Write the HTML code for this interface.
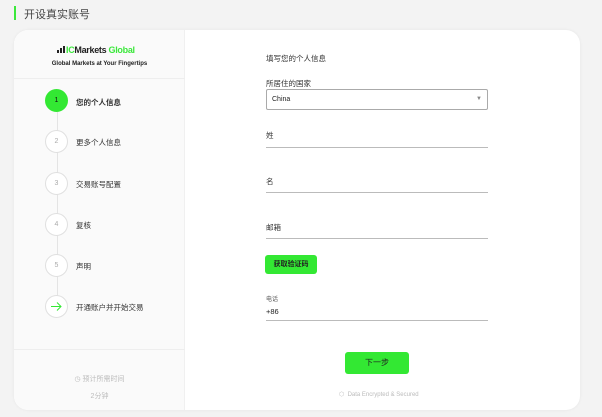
<!DOCTYPE html><html><head><meta charset="utf-8"><style>
*{margin:0;padding:0;box-sizing:border-box}
body{width:602px;height:417px;background:#f3f3f3;font-family:"Liberation Sans","Noto Sans CJK SC",sans-serif;position:relative;overflow:hidden;color:#222}
.a{position:absolute}
.card{left:14px;top:30px;width:566px;height:380px;background:#fff;border-radius:14px;box-shadow:0 0 3px rgba(0,0,0,.06);overflow:hidden}
.side{left:0;top:0;width:171px;height:380px;background:#fafafa;border-right:1px solid #f0f0f0}
.c{width:23px;height:23px;border-radius:50%;border:1px solid #e0e0e0;background:#fff;font-size:7px;color:#aaa;text-align:center;line-height:21px}
.st{font-size:7.5px;color:#333}
.lbl{font-size:7.5px;color:#333}
.ln{height:1px;background:#bbb;width:222px;left:266px}
</style></head><body>
<div class="a" style="left:14px;top:6px;width:2px;height:14px;background:#3be83b"></div>
<div class="a" style="left:24px;top:6px;font-size:11px;color:#444">开设真实账号</div>
<div class="a card">
 <div class="a side">
  <div class="a" style="left:43px;top:15px;font-size:9px;font-weight:bold;letter-spacing:-0.3px"><svg width="9" height="7" style="vertical-align:0"><rect x="0" y="4" width="2" height="3" fill="#222"/><rect x="3" y="2" width="2" height="5" fill="#222"/><rect x="6" y="0" width="2" height="7" fill="#222"/></svg><span style="color:#3be83b">IC</span>Markets <span style="color:#3be83b">Global</span></div>
  <div class="a" style="left:0;width:171px;top:31px;text-align:center;font-size:6px;font-weight:bold">Global Markets at Your Fingertips</div>
  <div class="a" style="left:0;top:48px;width:171px;height:1px;background:#eee"></div>
  <div class="a" style="left:43px;top:75px;width:1px;height:200px;background:#e4e4e4"></div>
  <div class="a c" style="left:31px;top:59px;background:#33e833;border-color:#33e833;color:#111">1</div><div class="a st" style="left:62px;top:67px;font-weight:bold">您的个人信息</div>
  <div class="a c" style="left:31px;top:100px">2</div><div class="a st" style="left:62px;top:107px">更多个人信息</div>
  <div class="a c" style="left:31px;top:142px">3</div><div class="a st" style="left:62px;top:149px">交易账号配置</div>
  <div class="a c" style="left:31px;top:183px">4</div><div class="a st" style="left:62px;top:190px">复核</div>
  <div class="a c" style="left:31px;top:224px">5</div><div class="a st" style="left:62px;top:231px">声明</div>
  <div class="a c" style="left:31px;top:265px"><svg width="21" height="21" viewBox="0 0 21 21" style="display:block"><path d="M5 10.5H15M11 6.5L15 10.5L11 14.5" fill="none" stroke="#33e833" stroke-width="1"/></svg></div><div class="a st" style="left:62px;top:272px">开通账户并开始交易</div>
  <div class="a" style="left:0;top:319px;width:171px;height:1px;background:#eee"></div>
  <div class="a" style="left:0;width:171px;top:344px;text-align:center;font-size:7px;color:#bbb">◷ 预计所需时间</div>
  <div class="a" style="left:0;width:171px;top:361px;text-align:center;font-size:7px;color:#bbb">2分钟</div>
 </div>
</div>
<div class="a lbl" style="left:266px;top:53px">填写您的个人信息</div>
<div class="a lbl" style="left:266px;top:78px">所居住的国家</div>
<div class="a" style="left:266px;top:89px;width:222px;height:21px;border:1px solid #aaa;border-radius:2px;font-size:7px;padding:6px 5px">China<span style="position:absolute;right:5px;top:6px;font-size:6px;color:#888">▼</span></div>
<div class="a lbl" style="left:266px;top:130px">姓</div><div class="a ln" style="top:147px"></div>
<div class="a lbl" style="left:266px;top:176px">名</div><div class="a ln" style="top:192px"></div>
<div class="a lbl" style="left:266px;top:222px">邮箱</div><div class="a ln" style="top:238px"></div>
<div class="a" style="left:265px;top:255px;width:52px;height:19px;background:#33e833;border-radius:3px;font-size:7px;font-weight:bold;text-align:center;line-height:19px">获取验证码</div>
<div class="a" style="left:266px;top:294px;font-size:6px;color:#555">电话</div>
<div class="a" style="left:266px;top:307px;font-size:7.5px">+86</div>
<div class="a ln" style="top:320px"></div>
<div class="a" style="left:345px;top:352px;width:64px;height:22px;background:#33e833;border-radius:3px;font-size:8px;text-align:center;line-height:22px">下一步</div>
<div class="a" style="left:339px;top:391px;font-size:6px;color:#bbb">⬡ &nbsp;Data Encrypted &amp; Secured</div>
</body></html>
